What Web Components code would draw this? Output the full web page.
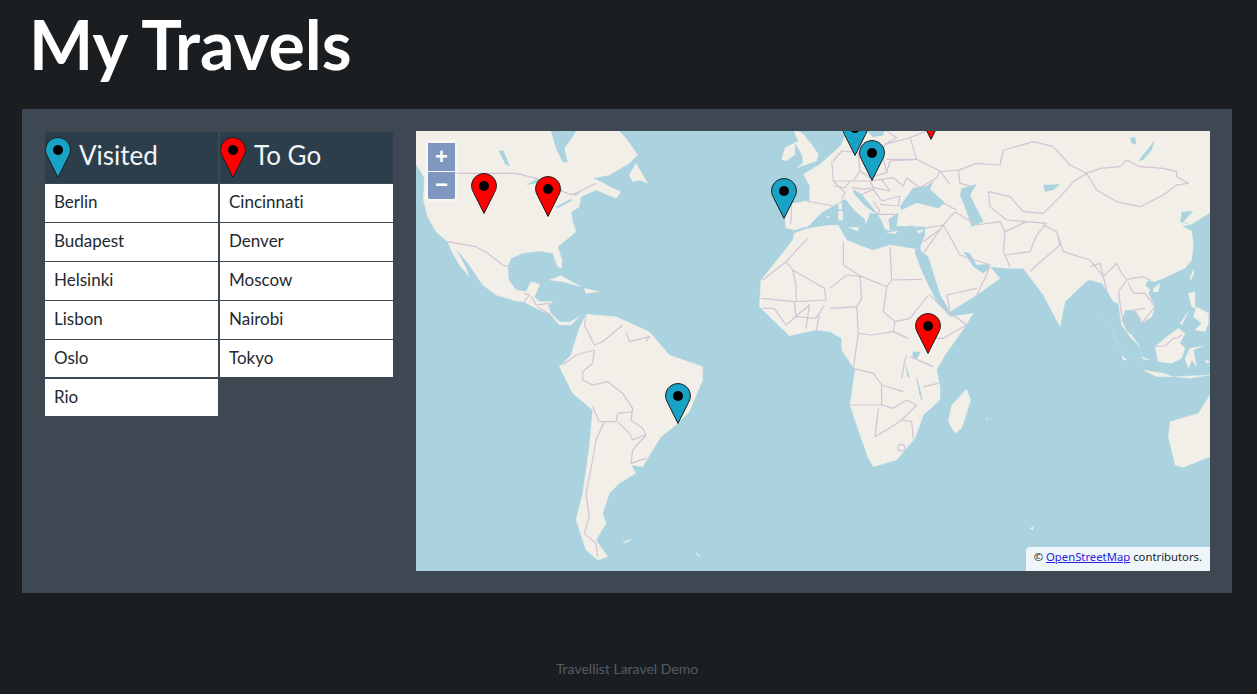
<!DOCTYPE html>
<html lang="en">
<head>
<meta charset="utf-8">
<title>My Travels</title>
<style>
  html, body { margin: 0; background: #1a1e21; }
</style>
</head>
<body>

<template class="page-title-template">
  <style>
    :host { display: block; height: 109px; padding-left: 7px; box-sizing: border-box; }
    h1 { margin: 0; color: #fff; font: 700 68px/88px Lato, sans-serif; }
  </style>
  <h1><slot></slot></h1>
</template>

<template class="travel-panel-template">
  <style>
    :host { display: flex; gap: 23px; height: 484px; box-sizing: border-box; padding: 22px; background: #3d4852; }
  </style>
  <slot></slot>
</template>

<template class="place-lists-template">
  <style>
    :host { display: flex; gap: 2px; width: 348px; flex: none; padding-top: 1px; margin-left: 1px; align-items: flex-start; }
  </style>
  <slot></slot>
</template>

<template class="place-list-template">
  <style>
    :host { display: flex; flex-direction: column; gap: 1.400px; width: 173px; }
    .head {
      display: flex;
      align-items: center;
      gap: 8px;
      height: 51px;
      background: #2c3e4b;
      color: #f1f5f8;
      font: 400 26px/46px Lato, sans-serif;
    }
    .label { margin-bottom: 6px; font-variant-ligatures: none; }
  </style>
  <div class="head"><map-pin-icon></map-pin-icon><span class="label"></span></div>
  <slot></slot>
</template>

<template class="place-item-template">
  <style>
    :host {
      display: block;
      height: 37.500px;
      padding-left: 9px;
      background: #fff;
      color: #22292f;
      font: 400 17px/35px Lato, sans-serif;
      font-variant-ligatures: none;
    }
  </style>
  <slot></slot>
</template>

<template class="map-pin-icon-template">
  <style>
    :host { display: block; width: 26px; height: 41px; flex: none; }
    svg { display: block; }
    .drop { fill: var(--pin-color, #17a2c6); }
  </style>
  <svg width="26" height="41" viewBox="0 0 26 41">
    <path class="drop" stroke="#1c1c1c" stroke-width="1" d="M13 .6C6.200.6.600 6 .600 12.800c0 2.600.8 4.600 2 6.900L13 40.400l10.400-20.700c1.200-2.300 2-4.300 2-6.900C25.400 6 19.800.6 13 .6z"/>
    <circle cx="13" cy="13" r="5" fill="#000"/>
  </svg>
</template>

<template class="world-map-template">
  <style>
    :host { display: block; position: relative; width: 794px; height: 440px; flex: none; overflow: hidden; background: #aad3df; }
    svg { display: block; filter: blur(.35px); }
    .land { fill: #f2efe9; stroke: #f2efe9; stroke-width: 1; }
    .water { fill: #aad3df; }
    .faint { fill: none; stroke: #bcdbe3; stroke-width: 2; }
    .border { fill: none; stroke: #d3c3d5; stroke-width: 3.600; stroke-linejoin: round; }
  </style>
  <!-- Coordinates are 3x the map's pixels, so that a crop of the map can be traced directly -->
  <svg width="794" height="440" viewBox="0 18 2382 1320">
    <!-- North and Central America -->
    <path class="land" d="M0 18V118L15 140 25 160 22 225 35 275 60 320 95 350 105 375 130 420 160 455 148 425 118 368 160 420 200 480 240 510 300 528 325 530 350 545 405 570 430 600 465 600 490 575 460 592 430 590 405 565 395 540 410 530 370 530 355 515 372 478 345 470 330 500 300 495 278 465 275 425 285 400 320 385 370 378 410 385 425 425 437 430 438 405 425 365 450 345 480 320 470 290 465 262 490 245 495 215 540 195 600 220 615 200 590 190 555 170 530 160 580 150 640 115 665 90 630 40 610 18z"/>
    <path class="land" d="M640 150L660 115 695 175 670 165 650 170zM400 465L435 452 495 485 440 470zM505 490L550 500 510 505z"/>
    <path class="water" d="M405 18L420 70 440 112 455 112 445 70 470 35 480 18zM248 78L262 76 282 125 268 118zM330 180L365 160 395 170 360 175zM372 190L380 240 368 220zM410 170L440 195 420 215 415 190zM420 245L465 222 470 226 425 250zM470 205L495 200 480 212z"/>
    <!-- South America -->
    <path class="land" d="M465 690L490 610 510 568 600 575 700 620 760 690 860 725 860 765 820 860 780 900 735 935 695 1000 680 1025 645 1020 660 1045 610 1075 580 1105 560 1165 570 1195 540 1245 575 1295 545 1305 510 1275 480 1185 500 1105 520 965 530 855 470 805 430 725z"/>
    <path class="land" d="M620 1250L648 1243 630 1253zM838 1280L855 1295 845 1290z"/>
    <!-- Eurasia, inland seas are painted on it afterwards -->
    <path class="land" d="M1109 308L1105 240 1172 228 1180 232 1182 183 1162 148 1212 118 1257 78 1277 58 1287 33 1277 18H2382V263L2327 298 2297 303 2327 318 2332 358 2327 405 2307 430 2252 455 2217 470 2197 465 2187 480 2202 495 2197 505 2217 545 2207 575 2177 595 2172 575 2152 555 2127 555 2117 585 2132 620 2147 630 2172 665 2142 635 2117 600 2107 535 2092 530 2072 495 2057 475 2022 465 2012 468 1947 530 1932 605 1882 510 1852 470 1822 430 1772 430 1722 425 1752 460 1682 510 1602 560 1577 520 1537 395 1517 380 1490 300 1245 380 1180 302 1135 315z"/>
    <!-- Africa -->
    <path class="land" d="M1135 325L1175 310 1242 302 1267 300 1287 345 1372 375 1422 360 1497 372 1497 385 1532 470 1562 530 1602 575 1672 565 1637 620 1587 690 1562 735 1572 785 1572 825 1522 870 1497 940 1442 1005 1372 1025 1357 1000 1327 915 1302 840 1317 735 1277 675 1277 640 1242 620 1200 615 1120 632 1030 545 1035 465 1100 385 1130 345z"/>
    <!-- Madagascar and Australia -->
    <g transform="translate(1242 675)">
      <path class="land" d="M355 215L365 165 410 118 422 150 395 235 375 250z"/>
      <path class="land" d="M1140 135L1105 190 1020 215 1015 260 1035 345 1060 352 1140 320z"/>
      <path class="land" d="M600 535L610 530 608 540zM468 205L474 205 472 209z"/>
    </g>
    <!-- South-east Asia -->
    <g transform="translate(2022 405)">
      <path class="faint" d="M65 225L100 260 160 310M40 150L35 165M60 195L90 265 110 300"/>
      <path class="land" d="M190 85L210 70 205 95 190 97zM300 55L310 28 312 40 303 60zM295 100L315 95 315 140 330 150 305 140zM320 140L355 160 355 190 345 215 315 210 335 190 310 170zM270 190L295 155 275 195zM195 260L225 235 265 205 285 220 270 250 285 265 275 295 245 310 205 305zM285 295L300 265 340 258 310 270 320 320 305 300 295 325zM160 330L220 340 250 350 200 350zM255 350L360 345 300 355zM345 300L360 305 350 310zM155 290L180 300 160 298zM95 285L110 300 100 300z"/>
      <path class="border" d="M195 260L225 258 250 235 265 232 275 225"/>
      <path class="border" d="M0 20L30 10 40 50 80 10 95 40 110 60 125 55 160 50 180 60M85 95L110 60M85 95L95 165 105 190 125 215M130 100L165 100 195 140 155 190 135 150M115 70L130 100M130 150L165 145M0 0L40 50 50 90"/>
    </g>
    <!-- Seas and borders of Asia -->
    <g transform="translate(1242 0)">
      <path class="water" d="M395 190L440 178 420 210 460 290 425 305 410 260 390 210z"/>
      <path class="water" d="M255 382L275 392 300 460 340 525 360 560 345 555 300 490 272 430z"/>
      <path class="water" d="M400 380L420 385 440 420 475 418 480 428 460 445 430 425z"/>
      <path class="water" d="M925 108L975 45 965 75 940 105zM640 180L690 178 670 195 645 200zM900 40L915 35 920 60 905 55zM1055 260L1090 258 1060 290 1085 300 1050 290z"/>
      <path class="border" d="M385 135L400 130 440 115 510 120 520 75 610 50 670 65 720 120 770 145 810 130 870 125 890 105 930 125 1000 130 1040 140 1040 155 1075 175 1040 180 1000 210 930 245 860 230 800 195 770 145M330 140L385 135 390 175 425 185M475 200L540 215 580 260 640 265 700 205 730 170 770 145M475 200L480 245 530 285 590 290M375 260L440 300 510 290 525 320 520 380 540 425M525 320L590 290 650 295 620 330 600 380 525 390M640 300L680 320 690 360 620 420 600 440M680 320L700 380 780 405M280 310L340 300 375 260M280 385L340 300 390 390 480 420 465 460 440 510M360 555L350 510 440 490M335 310L280 350M340 235L380 255"/>
      <!-- Borders of Africa north of the crop line -->
      <path class="border" d="M180 365L185 465 275 463M40 420L95 455 170 485 185 465M170 485L160 560 195 590 240 580 295 510M300 510L340 550 410 600 340 640 310 640M0 490L50 450 90 455 95 520 80 545 0 550M85 625L125 630 190 620 235 640M195 590L190 620M40 350L40 420M80 545L85 625"/>
    </g>
    <!-- Europe, traced at its own crop -->
    <g transform="translate(1062 18)">
      <path class="land" d="M35 85L45 50 75 35 75 70 50 90zM80 110L140 90 145 70 125 40 100 10 85 0H72L85 30 75 35 95 70 100 95z"/>
      <path class="water" d="M290 0H345L338 14 308 18z"/>
      <path class="water" d="M75 297L110 292 130 270 155 245 190 225 225 203 255 240 285 265 285 282 295 260 300 245 320 250 285 225 250 185 250 175 275 190 320 245 335 270 345 295 360 300 355 265 385 245 380 285 465 287 465 312 450 350 360 340 310 357 230 327 205 282 180 282 120 290z"/>
      <path class="land" d="M205 215L215 215 215 235 207 235zM205 240L218 240 218 268 206 268zM235 288L268 290 262 300zM350 305L385 300 375 308zM440 300L462 295 448 308zM170 255L180 258 172 260z"/>
      <path class="water" d="M390 225L415 190 430 170 470 165 490 150 480 175 525 215 505 232 440 215 395 237z"/>
      <path class="border" d="M185 90L190 150 225 185 215 205M110 210L190 225M65 215L62 280M190 90L215 60 265 65 270 120 250 150 190 150M265 65L335 65 350 125 300 140 270 120M335 65L345 40 380 20 350 0M345 40L420 20 440 85 350 85M350 125L360 90 440 85 510 120 500 140 450 170 410 140 400 165 370 140 300 150M190 150L240 150 225 170 190 165M250 150L300 150 310 170 280 175 245 170M300 150L335 145 360 180 310 170M275 190L310 175 335 210 390 195 385 225 330 220M310 210L330 240 320 250 375 250M420 20L470 0M510 120L540 160"/>
    </g>
    <!-- Borders, West Africa -->
    <path class="border" d="M1040 465L1110 410 1130 435 1225 490 1230 525 1140 530 1140 480 1130 435M1035 520L1135 530 1140 575 1200 580 1225 540M1040 550L1075 550 1110 600 1180 540 1170 610M1210 570L1200 620M1110 410L1175 340"/>
    <g transform="translate(1242 675)">
      <path class="border" d="M70 55L130 70 155 105 220 125M155 105L155 165 60 165M145 175L135 260 185 230 215 210 245 215 250 265M155 165L190 175 230 150 260 165 215 210M215 85L225 30 230 15M260 85L275 150M280 110L325 100M240 20L310 50M85 -50L70 55"/>
      <ellipse class="border" cx="214" cy="293" rx="10" ry="10"/>
      <path class="water" d="M248 5L272 5 262 25 248 22zM225 40L240 85 232 80zM262 90L275 135 268 135z"/>
    </g>
    <!-- Borders, North America -->
    <path class="border" d="M100 145H300L360 160 440 200 470 210 540 175M95 350L180 365 215 385 260 420 278 425M325 505L340 510 325 530M345 512L360 540 400 535M365 545L405 570"/>
    <!-- Borders, South America -->
    <g transform="translate(0 675)">
      <path class="border" d="M440 45L480 15 535 0 530 40 500 65 500 90 530 105 575 95 620 130 650 175 645 210 680 235 690 255 650 300 645 340 690 325M530 170L550 215 565 215 600 215 605 190 650 185M605 215L640 250 650 270 685 255M565 215L540 270 530 330 510 430 520 500 505 550 540 580 545 620"/>
    </g>
    <path class="border" d="M510 570L505 600 535 660 560 650 620 600M630 620L640 650 700 635 690 650"/>
  </svg>
  <slot></slot>
</template>

<template class="map-zoom-template">
  <style>
    :host {
      position: absolute;
      left: 9px;
      top: 9px;
      display: flex;
      flex-direction: column;
      gap: 1px;
      padding: 3px;
      border-radius: 4px;
      background: rgba(255, 255, 255, .4);
    }
    button {
      display: block;
      width: 27px;
      height: 27.500px;
      padding: 0;
      border: 0;
      background: #7f97c0;
      color: #fff;
      font: 700 22px/26px "Liberation Sans", sans-serif;
    }
    button:first-child { border-radius: 2px 2px 0 0; }
    button:last-child { border-radius: 0 0 2px 2px; }
  </style>
  <button type="button">+</button>
  <button type="button">−</button>
</template>

<template class="map-attribution-template">
  <style>
    :host {
      position: absolute;
      right: 0;
      bottom: 0;
      height: 24px;
      box-sizing: border-box;
      padding: 0 8px;
      border-top-left-radius: 4px;
      background: rgba(255, 255, 255, .8);
      color: #1d2327;
      font: 400 11.300px/20px "Noto Sans", sans-serif;
      white-space: nowrap;
    }
    a { color: #2a1ee0; }
  </style>
  © <a href="#">OpenStreetMap</a> contributors.
</template>

<template class="page-footer-template">
  <style>
    :host {
      display: block;
      padding-top: 66px;
      color: #515c66;
      text-align: center;
      font: 400 14px/20px Lato, sans-serif;
    }
  </style>
  <slot></slot>
</template>

<script>
/**
 * Build a custom element from a template of this page.
 * @param {string} name Tag name, its template has the class name-template.
 * @param {function} [ready] Called on each element when it enters the page.
 */
function defineFromTemplate(name, ready) {
  const template = document.querySelector("." + name + "-template").content

  customElements.define(name, class extends HTMLElement {
    constructor() {
      super()
      this.attachShadow({ mode: 'open' }).appendChild(template.cloneNode(true))
    }

    connectedCallback() {
      if(ready) ready(this)
    }
  })
}

defineFromTemplate("page-title")
defineFromTemplate("travel-panel")
defineFromTemplate("place-lists")
defineFromTemplate("map-pin-icon", function(pin) {
  // Pins on the map stand at their place on the map's canvas.
  if(pin.hasAttribute("x")) {
    pin.style.position = "absolute"
    pin.style.left = pin.getAttribute("x") + "px"
    pin.style.top = pin.getAttribute("y") + "px"
  }
  if(pin.hasAttribute("color")) {
    pin.style.setProperty("--pin-color", pin.getAttribute("color"))
  }
})
defineFromTemplate("place-list", function(list) {
  list.shadowRoot.querySelector(".label").textContent = list.getAttribute("label")
  list.style.setProperty("--pin-color", list.getAttribute("color"))
})
defineFromTemplate("place-item")
defineFromTemplate("world-map")
defineFromTemplate("map-zoom")
defineFromTemplate("map-attribution")
defineFromTemplate("page-footer")
</script>

<div style="padding: 0 25px 0 22px">
  <page-title>My Travels</page-title>
  <travel-panel>
    <place-lists>
      <place-list label="Visited" color="#17a2c6">
        <place-item>Berlin</place-item>
        <place-item>Budapest</place-item>
        <place-item>Helsinki</place-item>
        <place-item>Lisbon</place-item>
        <place-item>Oslo</place-item>
        <place-item>Rio</place-item>
      </place-list>
      <place-list label="To Go" color="#ff0000">
        <place-item>Cincinnati</place-item>
        <place-item>Denver</place-item>
        <place-item>Moscow</place-item>
        <place-item>Nairobi</place-item>
        <place-item>Tokyo</place-item>
      </place-list>
    </place-lists>
    <world-map>
      <map-pin-icon x="55" y="42" color="#ff0000"></map-pin-icon>
      <map-pin-icon x="119" y="45" color="#ff0000"></map-pin-icon>
      <map-pin-icon x="355" y="47"></map-pin-icon>
      <map-pin-icon x="426" y="-16"></map-pin-icon>
      <map-pin-icon x="443" y="9"></map-pin-icon>
      <map-pin-icon x="502" y="-32" color="#ff0000"></map-pin-icon>
      <map-pin-icon x="499" y="182" color="#ff0000"></map-pin-icon>
      <map-pin-icon x="249" y="252"></map-pin-icon>
      <map-zoom></map-zoom>
      <map-attribution></map-attribution>
    </world-map>
  </travel-panel>
  <page-footer>Travellist Laravel Demo</page-footer>
</div>
</body>
</html>
